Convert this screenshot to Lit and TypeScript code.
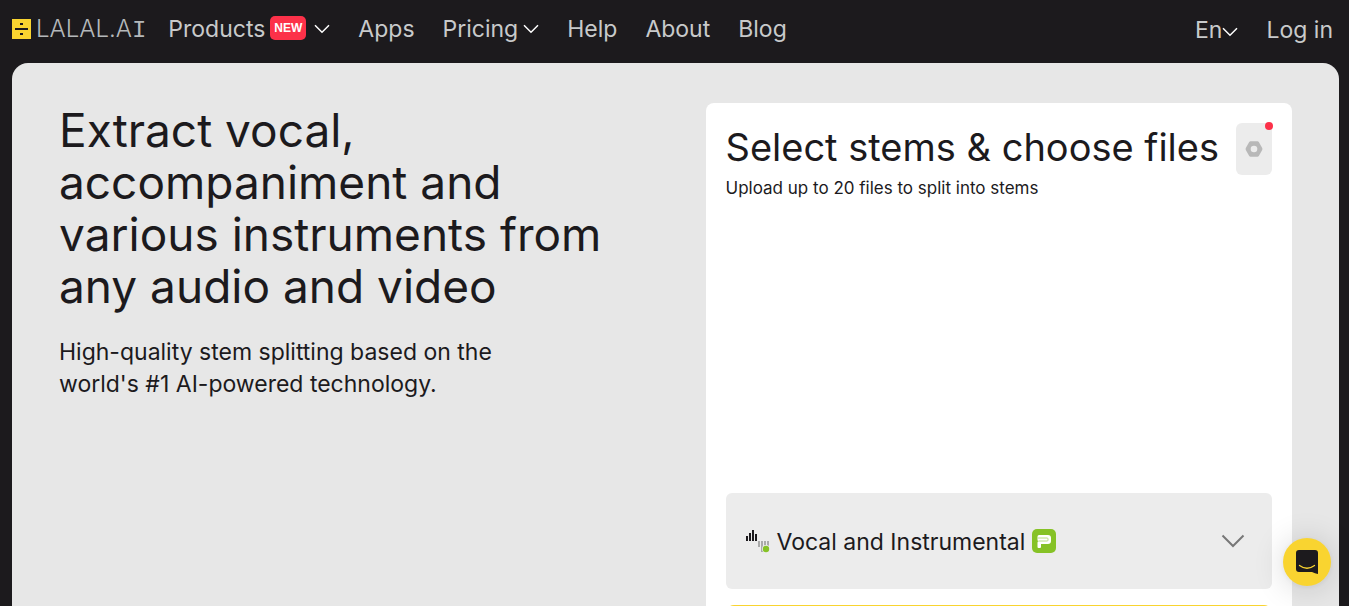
import { LitElement, html, css } from "lit";
import { customElement, property } from "lit/decorators.js";

interface NavItem {
  label: string;
  isNew?: boolean;
  menu?: boolean;
}

const NAV: NavItem[] = [
  { label: "Products", isNew: true, menu: true },
  { label: "Apps" },
  { label: "Pricing", menu: true },
  { label: "Help" },
  { label: "About" },
  { label: "Blog" },
];

const chevron = html`<svg class="chevron" width="16" height="10" viewBox="0 0 16 10" aria-hidden="true">
  <path d="M1 1.3 8 8.3 15 1.3" fill="none" stroke="#fff" stroke-width="1.5" />
</svg>`;

@customElement("site-header")
export class SiteHeader extends LitElement {
  static styles = css`
    :host {
      display: block;
      color: #c8cacb;
      font-size: 23px;
      line-height: 30px;
    }
    .bar {
      display: flex;
      align-items: center;
      height: 63px;
      padding: 0 16px 6px 12px;
      box-sizing: border-box;
    }
    a {
      color: inherit;
      text-decoration: none;
      white-space: nowrap;
    }
    .logo {
      display: flex;
      align-items: center;
      gap: 5px;
      margin-right: 22px;
      font-weight: 300;
      font-size: 24px;
      color: #b4b8ba;
    }
    .wordmark {
      padding-top: 3px;
    }
    .slab {
      font-family: "Liberation Mono", monospace;
    }
    .nav,
    .account {
      display: flex;
      align-items: center;
      gap: 28px;
    }
    .account {
      margin-left: auto;
      padding-top: 2px;
    }
    .item {
      display: flex;
      align-items: center;
      gap: 5px;
      padding: 0;
      border: 0;
      background: none;
      color: inherit;
      font: inherit;
      cursor: pointer;
    }
    .language {
      gap: 0;
    }
    .chevron {
      flex: none;
    }
    .language .chevron {
      margin-top: 4px;
    }
    .badge {
      margin-right: 3px;
      margin-bottom: 2px;
      padding: 0 4px;
      border-radius: 5px;
      background: #fc3149;
      color: #fff;
      font-family: "Liberation Sans", sans-serif;
      font-size: 12px;
      font-weight: 700;
      line-height: 24px;
    }
  `;

  render() {
    return html`
      <header class="bar">
        <a class="logo" href="#" aria-label="LALAL.AI">
          <svg width="19" height="20" viewBox="0 0 19 20" aria-hidden="true">
            <rect width="19" height="20" fill="#f9d430" />
            <path d="M8 4h3v2H8zM3 9h13v2H3zM8 14h3v2H8z" fill="#1c1a1d" />
          </svg>
          <span class="wordmark">LALAL.A<span class="slab">I</span></span>
        </a>
        <nav class="nav">
          ${NAV.map((item) =>
            item.menu
              ? html`<button class="item" type="button">
                  ${item.label}${item.isNew ? html`<span class="badge">NEW</span>` : ""}${chevron}
                </button>`
              : html`<a class="item" href="#">${item.label}</a>`
          )}
        </nav>
        <div class="account">
          <button class="item language" type="button">En${chevron}</button>
          <a class="item" href="#">Log in</a>
        </div>
      </header>
    `;
  }
}

@customElement("stem-picker")
export class StemPicker extends LitElement {
  @property() stem = "Vocal and Instrumental";

  static styles = css`
    :host {
      display: block;
      box-sizing: border-box;
      padding: 20px;
      border-radius: 8px;
      background: #fff;
    }
    .head {
      display: flex;
      justify-content: space-between;
      align-items: flex-start;
      gap: 8px;
    }
    .title {
      margin: 0;
      font-size: 38px;
      font-weight: 400;
      line-height: 48px;
      white-space: nowrap;
    }
    .hint {
      margin: 2px 0 294px;
      font-size: 17px;
      line-height: 22px;
    }
    .settings {
      position: relative;
      display: grid;
      place-items: center;
      flex: none;
      width: 36px;
      height: 52px;
      padding: 0;
      border: 0;
      border-radius: 6px;
      background: #ececec;
      cursor: pointer;
    }
    .dot {
      position: absolute;
      top: -1px;
      right: -1px;
      width: 8px;
      height: 8px;
      border-radius: 50%;
      background: #fc3149;
    }
    .stem {
      display: flex;
      align-items: center;
      gap: 7px;
      width: 100%;
      height: 96px;
      padding: 0 27px 0 20px;
      border: 0;
      border-radius: 6px;
      background: #ececec;
      color: inherit;
      font: inherit;
      font-size: 23px;
      cursor: pointer;
    }
    .name {
      padding-top: 2px;
    }
    .arrow {
      margin-left: auto;
    }
    .choose {
      display: block;
      width: 100%;
      height: 64px;
      margin-top: 16px;
      border: 0;
      border-radius: 8px;
      background: #f9d430;
      cursor: pointer;
    }
  `;

  render() {
    return html`
      <div class="head">
        <h2 class="title">Select stems &amp; choose files</h2>
        <button class="settings" type="button" aria-label="Settings">
          <svg width="18" height="16" viewBox="0 0 18 16" aria-hidden="true">
            <path
              d="M5.6.3h6.8q.9 0 1.4.8L17.2 7q.5 1 0 2l-3.4 5.9q-.5.8-1.4.8H5.6q-.9 0-1.4-.8L.8 9q-.5-1 0-2L4.2 1.1q.5-.8 1.4-.8z"
              fill="#b8b8b8"
            />
            <circle cx="9" cy="8" r="3.3" fill="#ececec" />
          </svg>
          <span class="dot"></span>
        </button>
      </div>
      <p class="hint">Upload up to 20 files to split into stems</p>
      <button class="stem" type="button">
        <svg width="24" height="24" viewBox="0 0 24 24" aria-hidden="true">
          <path d="M0 7h2v5H0zM3 4h2v8H3zM6 1h2v11H6zM9 5h2v7H9z" fill="#1c1a1d" />
          <path d="M12 12h2v6h-2zM15 12h2v11h-2zM18 12h2v9h-2zM21 12h2v5h-2z" fill="#aaa" />
          <circle cx="20" cy="20" r="4" fill="#ececec" />
          <circle cx="20" cy="20" r="3.2" fill="#86c226" />
        </svg>
        <span class="name">${this.stem}</span>
        <svg width="24" height="24" viewBox="0 0 24 24" aria-hidden="true">
          <rect width="24" height="24" rx="5" fill="#86c226" />
          <path
            d="M7 6h9q3 0 3 3v3q0 3-3 3H9v3q0 1-1 1H6.500q-1 0-1-1v-4.500q0-1.500 1.500-1.500h-.5q-1 0-1-1V7.500q0-1.500 1.500-1.500z"
            fill="#fff"
          />
          <path d="M6 9h9q1 0 1 .8v1.400q0 .8-1 .8H6.500" fill="none" stroke="#b9dc82" stroke-width="1" />
        </svg>
        <svg class="arrow" width="24" height="14" viewBox="0 0 24 14" aria-hidden="true">
          <path d="M1.5 1.5 12 12 22.5 1.5" fill="none" stroke="#777" stroke-width="2" />
        </svg>
      </button>
      <button class="choose" type="button" aria-label="Choose files"></button>
    `;
  }
}

@customElement("app-root")
export class AppRoot extends LitElement {
  static styles = css`
    :host {
      display: flex;
      flex-direction: column;
      height: 100vh;
      overflow: hidden;
      background: #1c1a1d;
      color: #1c1a1d;
      font-family: Inter, "Open Sans", sans-serif;
    }
    .page {
      flex: 1;
      min-height: 0;
      display: grid;
      grid-template-columns: 1fr 1fr;
      align-items: start;
      gap: 60px;
      margin: 0 10px 0 12px;
      padding: 40px 47px 0;
      border-radius: 16px 16px 0 0;
      background: #e7e7e7;
    }
    .headline {
      margin: 1px 0 24px;
      font-size: 46px;
      font-weight: 400;
      line-height: 52px;
    }
    .lead {
      max-width: 480px;
      margin: 0;
      font-size: 23px;
      line-height: 32px;
    }
    .chat {
      position: fixed;
      right: 18px;
      bottom: 20px;
      display: grid;
      place-items: center;
      width: 48px;
      height: 48px;
      padding: 0;
      border: 0;
      border-radius: 50%;
      background: #f9d430;
      box-shadow: 0 1px 6px rgba(0, 0, 0, 0.06), 0 2px 32px rgba(0, 0, 0, 0.16);
      cursor: pointer;
    }
  `;

  render() {
    return html`
      <site-header></site-header>
      <main class="page">
        <section>
          <h1 class="headline">Extract vocal, accompaniment and various instruments from any audio and video</h1>
          <p class="lead">High-quality stem splitting based on the world's #1 AI-powered technology.</p>
        </section>
        <stem-picker></stem-picker>
      </main>
      <button class="chat" type="button" aria-label="Open chat">
        <svg width="22" height="24" viewBox="0 0 22 24" aria-hidden="true">
          <path d="M3 0h16q3 0 3 3v21q-3-.6-6-2H3q-3 0-3-3V3q0-3 3-3z" fill="#1c1a1d" />
          <path d="M3.5 15.5q7.5 5.5 15 0" fill="none" stroke="#f9d430" stroke-width="1.3" stroke-linecap="round" />
        </svg>
      </button>
    `;
  }
}
